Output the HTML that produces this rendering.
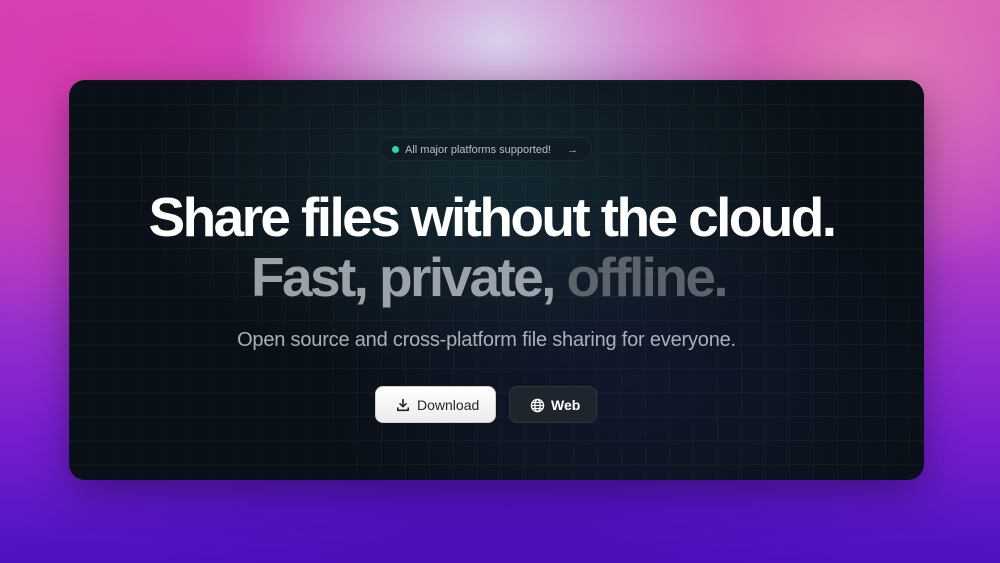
<!DOCTYPE html>
<html><head><meta charset="utf-8"><style>
html,body{margin:0;padding:0;width:1000px;height:563px;overflow:hidden}
body{position:relative;font-family:"Liberation Sans",sans-serif;
background:
radial-gradient(ellipse 260px 180px at 500px 40px,#d8d0ea 0%,rgba(214,205,235,0.6) 45%,rgba(214,205,235,0) 100%),
radial-gradient(ellipse 260px 220px at 880px 60px,#e07ab8 0%,rgba(224,122,184,0) 100%),
radial-gradient(ellipse 400px 260px at 80px 60px,#d63cb0 0%,rgba(214,60,176,0) 100%),
radial-gradient(ellipse 500px 200px at 500px 563px,#4a0fb8 0%,rgba(74,15,184,0) 100%),
linear-gradient(180deg,#d24fb8 0%,#b53fc6 40%,#7a1fd0 75%,#4c12c0 100%);}
.card{position:absolute;left:69px;top:80px;width:855px;height:400px;border-radius:16px;overflow:hidden;
background:radial-gradient(ellipse 360px 200px at 420px 100px,rgba(28,62,72,0.5),rgba(20,40,60,0) 100%),radial-gradient(ellipse 320px 220px at 560px 300px,rgba(25,30,65,0.5),rgba(0,0,0,0) 100%),#0a1017;
box-shadow:0 10px 40px rgba(0,0,0,0.35)}
.grid{position:absolute;inset:0;background-image:linear-gradient(rgba(255,255,255,0.03) 1px,transparent 1px),linear-gradient(90deg,rgba(255,255,255,0.03) 1px,transparent 1px);background-size:24px 24px}
.pill{position:absolute;left:310px;top:57px;width:213px;height:24px;border-radius:12px;background:#0f1c24;border:1px solid #1d2a33;color:#b8c0c8;font-size:11px;line-height:24px;box-sizing:border-box;padding-left:25px}
.pill .dot{position:absolute;left:12px;top:8px;width:7px;height:7px;border-radius:50%;background:#2dd4b0}
.pill .ar{position:absolute;right:13px;top:0}
h1{position:absolute;left:-5px;width:855px;top:105px;margin:0;text-align:center;color:#fff;font-size:55px;font-weight:bold;letter-spacing:-2.6px;line-height:64px;white-space:nowrap}
h2{position:absolute;left:-8px;width:855px;top:165px;margin:0;text-align:center;font-size:55px;font-weight:bold;letter-spacing:-2.6px;line-height:64px;white-space:nowrap;color:#9ca2a9}
h2 span{color:#5c636b}
.sub{position:absolute;left:-10px;width:855px;top:249px;text-align:center;color:#a9b0b8;font-size:20px;letter-spacing:-0.2px}
.btn{position:absolute;top:306px;height:37px;border-radius:8px;font-size:14px;line-height:37px;box-sizing:border-box}
.dl{left:306px;width:121px;background:linear-gradient(#fff,#ececec);color:#1f2328;border:1px solid #d0d0d0;padding-left:41px}
.web{left:440px;width:88px;background:#1f252d;color:#fff;border:1px solid #2d343c;padding-left:41px;font-weight:bold}
.btn svg{position:absolute;left:20px;top:11px}
</style></head><body>
<div class="card"><div class="grid"></div>
<div class="pill"><span class="dot"></span>All major platforms supported!<span class="ar">→</span></div>
<h1>Share files without the cloud.</h1>
<h2>Fast, private, <span>offline.</span></h2>
<div class="sub">Open source and cross-platform file sharing for everyone.</div>
<div class="btn dl"><svg width="14" height="14" viewBox="0 0 14 14" fill="none" stroke="#1f2328" stroke-width="1.6" stroke-linecap="round" stroke-linejoin="round"><path d="M7 1.5v7M4 5.8l3 2.9 3-2.9M1.8 10v2.3h10.4V10"/></svg>Download</div>
<div class="btn web"><svg width="15" height="15" viewBox="0 0 16 16" fill="none" stroke="#fff" stroke-width="1.4"><circle cx="8" cy="8" r="6.5"/><ellipse cx="8" cy="8" rx="2.8" ry="6.5"/><path d="M1.5 8h13M2.5 4.8h11M2.5 11.2h11"/></svg>Web</div>
</div>
</body></html>
